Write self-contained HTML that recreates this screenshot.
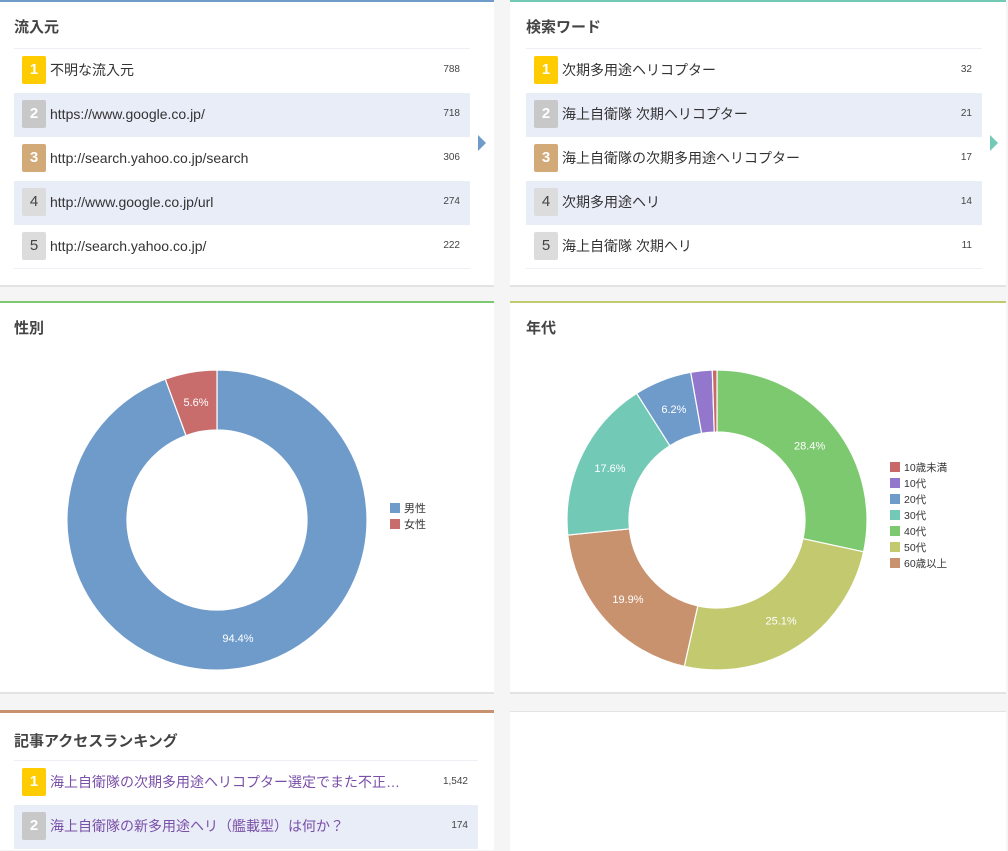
<!DOCTYPE html>
<html><head><meta charset="utf-8"><style>
*{margin:0;padding:0;box-sizing:border-box}
body{width:1008px;height:844px;background:#f5f5f5;position:relative;overflow:hidden;font-family:"Liberation Sans","Noto Sans CJK JP",sans-serif;color:#333}
.p{position:absolute;background:#fff;border-bottom:2px solid #e3e3e3}
.h{position:absolute;left:14px;top:14px;font-size:15px;font-weight:bold;color:#444}
.list{position:absolute;left:14px;right:24px;top:46px;border-top:1px solid #eef0f6}
.row{height:44px;position:relative;font-size:14px;line-height:42px;padding-left:36px;color:#333}
.row.a{background:#e9edf8}
.b{position:absolute;left:8px;top:7px;width:24px;height:28px;line-height:28px;text-align:center;color:#fff;font-size:15px;font-weight:bold;border-radius:2px}
.n{position:absolute;right:10px;top:0;font-size:10px;color:#444}
.last{border-bottom:1px solid #eef0f6}
.tri{position:absolute;width:0;height:0;border-top:8px solid transparent;border-bottom:8px solid transparent;border-left:8px solid #6f9bcb}
.lg{position:absolute;font-size:11px;line-height:16px}
.lg i{display:inline-block;width:10px;height:10px;margin-right:4px;vertical-align:-1px}
</style></head><body>

<div class="p" style="left:0;top:0;width:494px;height:287px;border-top:2px solid #6f9bcb">
<div class="h">流入元</div>
<div class="list">
<div class="row"><span class="b" style="background:#ffcc00">1</span>不明な流入元<span class="n">788</span></div>
<div class="row a"><span class="b" style="background:#c8c8c8">2</span>https://www.google.co.jp/<span class="n">718</span></div>
<div class="row"><span class="b" style="background:#d2aa78">3</span>http://search.yahoo.co.jp/search<span class="n">306</span></div>
<div class="row a"><span class="b" style="background:#dcdcdc;color:#444;font-weight:normal">4</span>http://www.google.co.jp/url<span class="n">274</span></div>
<div class="row last"><span class="b" style="background:#dcdcdc;color:#444;font-weight:normal">5</span>http://search.yahoo.co.jp/<span class="n">222</span></div>
</div>
<div class="tri" style="left:478px;top:133px"></div>
</div>

<div class="p" style="left:510px;top:0;width:496px;height:287px;border-top:2px solid #72c9b6">
<div class="h" style="left:16px">検索ワード</div>
<div class="list" style="left:16px">
<div class="row"><span class="b" style="background:#ffcc00">1</span>次期多用途ヘリコプター<span class="n">32</span></div>
<div class="row a"><span class="b" style="background:#c8c8c8">2</span>海上自衛隊 次期ヘリコプター<span class="n">21</span></div>
<div class="row"><span class="b" style="background:#d2aa78">3</span>海上自衛隊の次期多用途ヘリコプター<span class="n">17</span></div>
<div class="row a"><span class="b" style="background:#dcdcdc;color:#444;font-weight:normal">4</span>次期多用途ヘリ<span class="n">14</span></div>
<div class="row last"><span class="b" style="background:#dcdcdc;color:#444;font-weight:normal">5</span>海上自衛隊 次期ヘリ<span class="n">11</span></div>
</div>
<div class="tri" style="left:480px;top:133px;border-left-color:#72c9b6"></div>
</div>

<div class="p" style="left:0;top:301px;width:494px;height:393px;border-top:2px solid #7dc96f">
<div class="h">性別</div>
<div class="lg" style="left:390px;top:198px"><div><i style="background:#6f9bcb"></i>男性</div><div><i style="background:#c96c6c"></i>女性</div></div>
</div>

<div class="p" style="left:510px;top:301px;width:496px;height:393px;border-top:2px solid #c2c96f">
<div class="h" style="left:16px">年代</div>
<div class="lg" style="left:380px;top:157px;font-size:10.5px;line-height:16px">
<div><i style="background:#c96868"></i>10歳未満</div><div><i style="background:#9277cc"></i>10代</div><div><i style="background:#6f9bcb"></i>20代</div><div><i style="background:#72c9b6"></i>30代</div><div><i style="background:#7dc96f"></i>40代</div><div><i style="background:#c2c96f"></i>50代</div><div><i style="background:#c9926f"></i>60歳以上</div></div>
</div>

<div class="p" style="left:0;top:710px;width:494px;height:140px;border-top:3px solid #c9926f;border-bottom:none">
<div class="h" style="top:17px">記事アクセスランキング</div>
<div class="list" style="top:47px;right:16px">
<div class="row" style="color:#7a4fa8"><span class="b" style="background:#ffcc00">1</span>海上自衛隊の次期多用途ヘリコプター選定でまた不正…<span class="n">1,542</span></div>
<div class="row a" style="color:#7a4fa8"><span class="b" style="background:#c8c8c8">2</span>海上自衛隊の新多用途ヘリ（艦載型）は何か？<span class="n">174</span></div>
</div>
</div>
<div class="p" style="left:510px;top:711px;width:496px;height:140px;border-top:1px solid #e3e3e3;border-bottom:none"></div>

<svg id="s" style="position:absolute;left:0;top:0" width="1008" height="844"></svg>
<script>
function donut(cx,cy,R,r,data){
 var s=document.getElementById('s'),a=-Math.PI/2,out='';
 data.forEach(function(d){
  var b=a+d[0]/100*2*Math.PI,l=(b-a)>Math.PI?1:0;
  function p(rr,t){return (cx+rr*Math.cos(t)).toFixed(2)+' '+(cy+rr*Math.sin(t)).toFixed(2)}
  out+='<path d="M'+p(R,a)+' A'+R+' '+R+' 0 '+l+' 1 '+p(R,b)+' L'+p(r,b)+' A'+r+' '+r+' 0 '+l+' 0 '+p(r,a)+'Z" fill="'+d[1]+'" stroke="#fff" stroke-width="1.2"/>';
  if(d[2]){var m=(a+b)/2,rr=(R+r)/2;out+='<text x="'+(cx+rr*Math.cos(m))+'" y="'+(cy+rr*Math.sin(m)+4)+'" fill="#fff" font-size="11" text-anchor="middle" font-family="Liberation Sans,sans-serif">'+d[2]+'</text>';}
  a=b;});
 s.innerHTML+=out;}
donut(217,520,150,90,[[94.4,'#6f9bcb','94.4%'],[5.6,'#c96c6c','5.6%']]);
donut(717,520,150,88,[[28.4,'#7dc96f','28.4%'],[25.1,'#c2c96f','25.1%'],[19.9,'#c9926f','19.9%'],[17.6,'#72c9b6','17.6%'],[6.2,'#6f9bcb','6.2%'],[2.3,'#9277cc',''],[0.5,'#c96868','']]);
</script>
</body></html>
